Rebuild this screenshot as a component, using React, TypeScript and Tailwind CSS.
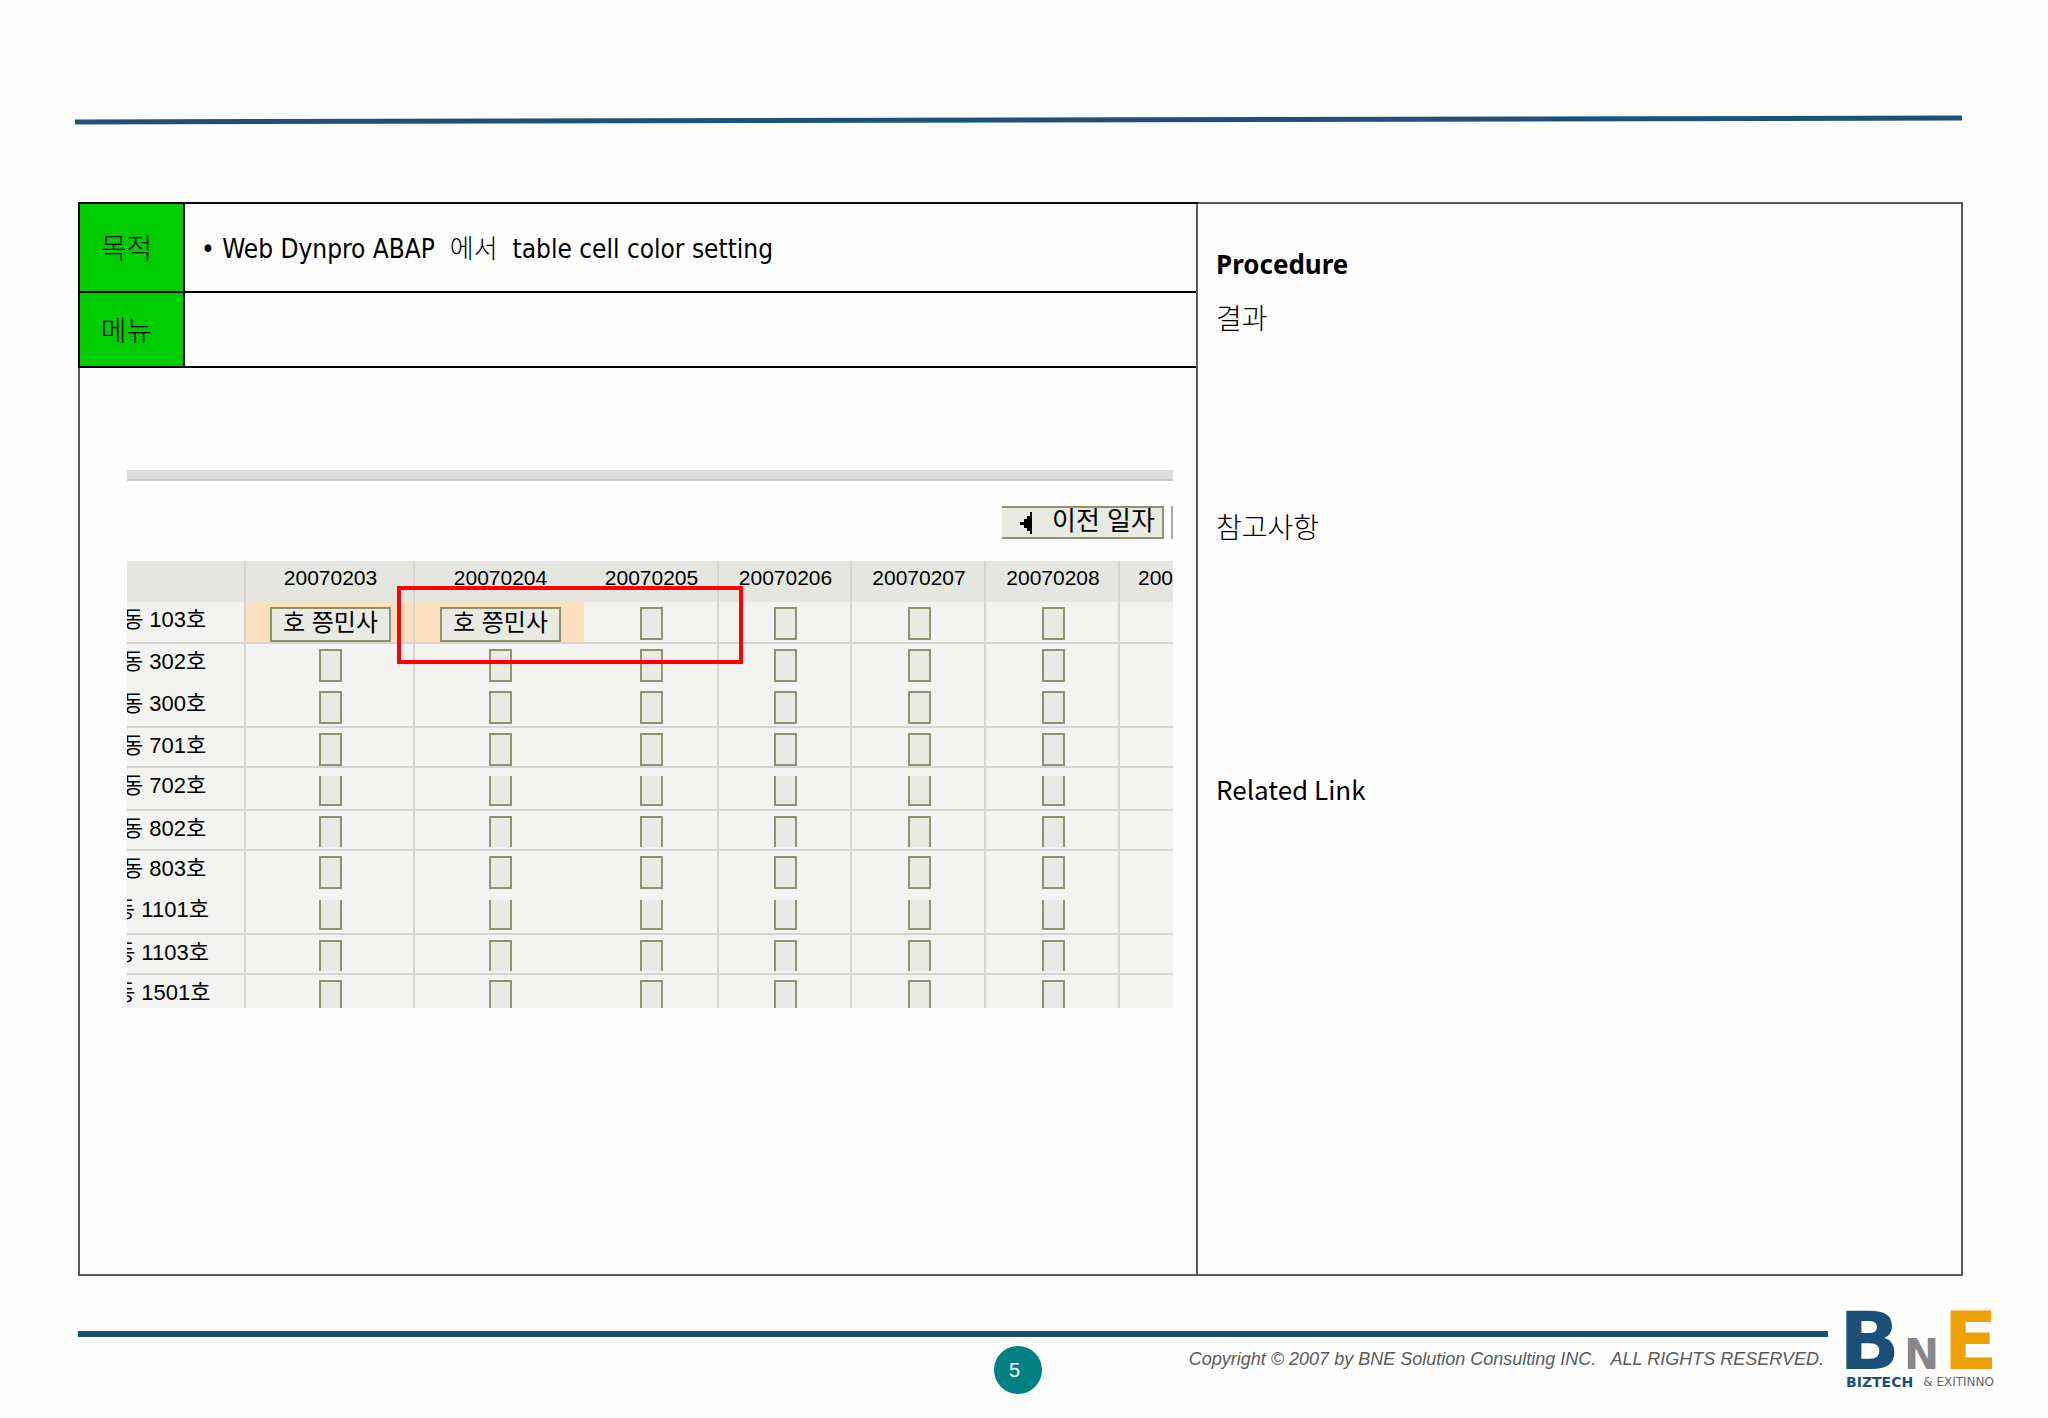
import React from 'react';

type Edge = 'full' | 'noTop' | 'noBottom';

interface Row {
  label: string;
  height: string;
  edge: Edge;
  line: boolean;
  indent: string;
}

const rows: Row[] = [
  { label: '동 103호', height: 'h-[42px]', edge: 'full', line: true, indent: '-ml-1' },
  { label: '동 302호', height: 'h-[42px]', edge: 'full', line: false, indent: '-ml-1' },
  { label: '동 300호', height: 'h-[42px]', edge: 'full', line: true, indent: '-ml-1' },
  { label: '동 701호', height: 'h-[40px]', edge: 'full', line: true, indent: '-ml-1' },
  { label: '동 702호', height: 'h-[43px]', edge: 'noTop', line: true, indent: '-ml-1' },
  { label: '동 802호', height: 'h-[40px]', edge: 'noBottom', line: true, indent: '-ml-1' },
  { label: '동 803호', height: 'h-[41px]', edge: 'full', line: false, indent: '-ml-1' },
  { label: '동 1101호', height: 'h-[43px]', edge: 'noTop', line: true, indent: '-ml-3' },
  { label: '동 1103호', height: 'h-[40px]', edge: 'noBottom', line: true, indent: '-ml-3' },
  { label: '동 1501호', height: 'h-[33px]', edge: 'noBottom', line: false, indent: '-ml-3' },
];

const dates = ['20070203', '20070204', '20070205', '20070206', '20070207', '20070208', '200'];

const edges: Record<Edge, string> = {
  full: 'h-[33px] mt-[5px] border-2',
  noTop: 'h-[30px] mt-[8px] border-x-2 border-b-2',
  noBottom: 'h-[31px] mt-[5px] border-x-2 border-t-2',
};

const Slot: React.FC<{ edge: Edge; label: string }> = ({ edge, label }) => (
  <button aria-label={label} className={`block w-[23px] mx-auto border-[#8f9372] bg-[#e9eae3] ${edges[edge]}`} />
);

const ScheduleTable: React.FC = () => (
  <div className="overflow-hidden h-[447px]">
    <table className="w-full table-fixed border-separate border-spacing-0 bg-[#f3f3f1] text-[21px] leading-6">
      <colgroup>
        <col className="w-[119px]" />
        <col className="w-[169px]" />
        <col className="w-[169px]" />
        <col className="w-[135px]" />
        <col className="w-[133px]" />
        <col className="w-[134px]" />
        <col className="w-[134px]" />
        <col className="w-[53px]" />
      </colgroup>
      <thead>
        <tr className="h-[41px] bg-[#e5e6e1]">
          <th className="p-0 border-r-2 border-[#d4d4d2]"></th>
          {dates.map((date, i) => (
            <th
              key={date}
              className={`p-0 pb-2 font-normal overflow-hidden border-[#d4d4d2] ${i === 6 ? 'pl-[18px] text-left' : 'pl-[2px] text-center'} ${i === 1 || i === 6 ? '' : 'border-r-2'}`}
            >
              {date}
            </th>
          ))}
        </tr>
      </thead>
      <tbody>
        {rows.map((row, r) => {
          const line = row.line ? 'border-b-2' : '';
          return (
            <tr key={row.label} className={row.height}>
              <th className={`p-0 font-normal text-left align-top overflow-hidden border-r-2 border-[#d4d4d2] ${line}`}>
                <div className={`pt-[6px] h-[31px] text-[22px] whitespace-nowrap ${row.indent}`}>{row.label}</div>
              </th>
              {dates.map((date, c) => {
                const booked = r === 0 && c < 2;
                return (
                  <td
                    key={date}
                    className={`p-0 pl-[2px] align-top border-[#d4d4d2] ${line} ${c === 1 || c === 6 ? '' : 'border-r-2'} ${booked ? 'bg-[#fce0c0]' : ''}`}
                  >
                    {booked && (
                      <button className="block w-[121px] h-[35px] mx-auto mt-[5px] pb-1 border-2 border-[#8f9372] bg-[#e9eae3] text-[24px] leading-6 whitespace-nowrap">
                        호 쯩민사
                      </button>
                    )}
                    {!booked && c < 6 && <Slot edge={row.edge} label={`${row.label} ${date}`} />}
                  </td>
                );
              })}
            </tr>
          );
        })}
      </tbody>
    </table>
  </div>
);

const Capture: React.FC = () => (
  <div className="relative ml-[49px] mr-[25px] mt-[102px]">
    <div className="h-[11px] bg-[#dcdcda] border-b-2 border-[#cbcbc8]"></div>
    <div className="flex justify-end gap-[7px] mt-[25px] mb-[22px]">
      <button className="flex items-center w-[162px] h-[33px] pl-[18px] pb-1 border-y-2 border-r-2 border-[#8f9372] bg-[#e9eae3] text-[26px] leading-6 whitespace-nowrap">
        <svg viewBox="0 0 12 22" className="shrink-0 w-3 h-[22px] mt-1 mr-5">
          <path d="M12 0v22h-2v-3H7v-3H4v-3H0v-3h4V7h3V4h3V0z" />
        </svg>
        이전 일자
      </button>
      <div className="w-[2px] h-[33px] border-l-2 border-y-2 border-[#a9aaa0]"></div>
    </div>
    <ScheduleTable />
    {/* Highlight over the coloured cells */}
    <div className="absolute left-[270px] top-[116px] w-[346px] h-[78px] border-4 border-[#fe0000]"></div>
  </div>
);

const Logo: React.FC = () => (
  <div className="font-['DejaVu_Sans'] font-bold w-[148px] pt-px">
    <div className="flex items-baseline justify-between -ml-[7px] -mr-1 text-[80px] leading-[58px]">
      <span className="text-[#1b4f77]">B</span>
      <span className="text-[42px] leading-none text-[#87868b]">N</span>
      <span className="text-[#eea004]">E</span>
    </div>
    <div className="flex items-center justify-between -mt-[2px] text-[12px] leading-4 whitespace-nowrap">
      <span className="text-[14px] text-[#1b4f77]">BIZTECH</span>
      <span className="font-normal text-[#6b6560]">&amp; EXITINNO</span>
    </div>
  </div>
);

export default function App() {
  return (
    <div className="min-h-screen bg-[#fefefe] pt-[115px] pl-[78px] text-black font-['Liberation_Sans','Noto_Sans_CJK_KR',sans-serif]">
      <svg viewBox="0 0 1888 10" preserveAspectRatio="none" className="block h-[10px] -ml-[3px] w-[calc(100%-83px)]">
        <line x1="0" y1="7" x2="1888" y2="3" stroke="#1e5078" strokeWidth="5" />
      </svg>

      <main className="flex mt-[77px] mr-[85px] min-h-[1074px] border-2 border-[#5c5a5e]">
        <section className="flex-[1127_1_0%] -ml-[2px] -mt-[2px] -mr-[2px]">
          <table className="w-full table-fixed border-collapse font-['DejaVu_Sans_Condensed','Noto_Sans_CJK_KR',sans-serif] text-[28px]">
            <tbody>
              <tr className="h-[89px]">
                <th className="w-[105px] bg-[#00cc00] border-2 border-black pr-[10px] pt-1 font-light">목적</th>
                <td className="border-2 border-black pl-4 pt-[3px] text-[26px] whitespace-pre">• Web Dynpro ABAP  <span className="font-light">에서</span>  table cell color setting</td>
              </tr>
              <tr className="h-[75px]">
                <th className="bg-[#00cc00] border-2 border-black pr-[10px] pt-1 font-light">메뉴</th>
                <td className="border-2 border-black"></td>
              </tr>
            </tbody>
          </table>
          <Capture />
        </section>
        <aside className="flex-[756_1_0%] border-l-2 border-[#5c5a5e] pl-[18px] pt-[44px] text-[28px] leading-8">
          <h2 className="text-[26px] font-bold font-['Noto_Sans',sans-serif]">Procedure</h2>
          <p className="mt-[24px] font-light">결과</p>
          <p className="mt-[177px] font-light">참고사항</p>
          <p className="mt-[228px] text-[26px] font-['Noto_Sans_CJK_KR',sans-serif]">Related Link</p>
        </aside>
      </main>

      <footer className="flex items-start mt-[36px] mr-[54px]">
        <div className="flex-1 mt-[19px]">
          <div className="h-[6px] bg-[#1b4f77]"></div>
          <div className="grid grid-cols-[915fr_48px_786fr] mt-[9px]">
            <span></span>
            <span className="flex items-center justify-center size-12 pr-[6px] rounded-full bg-[#008080] text-white text-[20px]">5</span>
            <small className="text-right pr-1 text-[18px] leading-[26px] italic text-[#5a5a5a] whitespace-pre">Copyright © 2007 by BNE Solution Consulting INC.   ALL RIGHTS RESERVED.</small>
          </div>
        </div>
        <div className="ml-[18px]">
          <Logo />
        </div>
      </footer>
    </div>
  );
}
